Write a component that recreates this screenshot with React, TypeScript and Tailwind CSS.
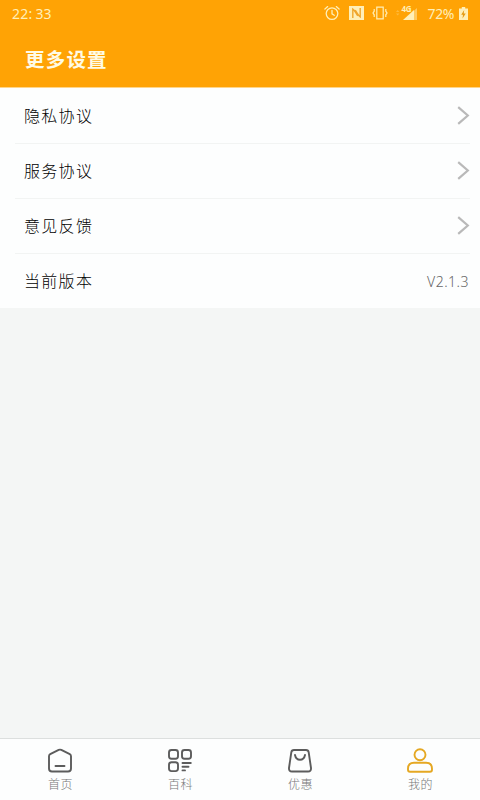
import type { ReactNode } from 'react'

const rows = [
  { label: '隐私协议' },
  { label: '服务协议' },
  { label: '意见反馈' },
  { label: '当前版本', value: 'V2.1.3' },
]

function StatusBar() {
  return (
    <div className="flex h-[27px] items-center justify-between pl-3 pr-3 text-[#ffefb8]">
      <span className="flex text-[14px] leading-none tracking-[0.2px]">
        22:<span className="ml-[3px]">33</span>
      </span>
      <div className="flex items-center">
        {/* Alarm */}
        <svg className="-mt-px" width="16" height="16" viewBox="0 0 16 16" fill="none" stroke="currentColor" strokeWidth="1.3" strokeLinecap="round">
          <circle cx="8" cy="8.6" r="5.8" />
          <path d="M8 5.3v3.5l2.2 1.5M.9 4l2.8-2.4M15.1 4l-2.8-2.4" />
        </svg>
        {/* NFC */}
        <svg className="-mt-px ml-[9px]" width="15" height="14" viewBox="0 0 15 14">
          <path fill="currentColor" d="M0 0h15v14H0z" />
          <path fill="none" stroke="#f0a62c" strokeWidth="1.4" d="M3.8 12V3c1.4.8 2.2 2.6 5 6.8M11.2 2v9c-1.4-.8-2.2-2.6-5-6.8" />
        </svg>
        {/* Vibrate */}
        <svg className="-mt-px ml-2" width="16" height="14" viewBox="0 0 16 14" fill="none" stroke="currentColor" strokeWidth="1.2">
          <path d="M4.8 1.2h6.4v11.6H4.8zM2.2 3v2.2L1 7l1.2 1.8V11M13.8 3v2.2L15 7l-1.2 1.8V11" />
        </svg>
        {/* Mobile signal */}
        <svg className="ml-2 -mt-[3px] overflow-visible" width="24" height="17" viewBox="0 0 24 17">
          <path fill="currentColor" opacity=".3" d="M0 8l1.7-2 1.7 2zM0 9.5l1.7 2 1.7-2z" />
          <path fill="currentColor" opacity=".5" d="M21 4v12h-5V8.5z" />
          <path fill="currentColor" d="M18 6V16H7z" />
        </svg>
        <span className="-ml-[18px] -mt-[9px] w-[18px] text-[8px] font-bold leading-[10px] tracking-[-0.3px]">4G</span>
        <span className="ml-[8px] text-[14px] leading-none tracking-[-0.4px]">72%</span>
        {/* Charging battery */}
        <svg className="ml-[5px]" width="9" height="13" viewBox="0 0 9 13">
          <path fill="currentColor" d="M2.8 0h3.4v1.5H9V13H0V1.5h2.8z" />
          <path fill="#e59a12" d="M5.2 3L2.2 7.7H4l-.5 3.8 3.2-5h-2z" />
        </svg>
      </div>
    </div>
  )
}

function TabIcon({ children }: { children: ReactNode }) {
  return (
    <svg width="28" height="26" viewBox="0 -0.5 28 26" fill="none" stroke="currentColor" strokeWidth="1.9" strokeLinecap="round" strokeLinejoin="round">
      {children}
    </svg>
  )
}

const tabs = [
  {
    label: '首页',
    icon: <path d="M12.7 2.4L4.2 6.7Q3 7.3 3 8.7V21q0 3 3 3h16q3 0 3-3V8.7q0-1.4-1.2-2L15.3 2.4q-1.3-.6-2.6 0zM9.5 18.5h9" />,
  },
  {
    label: '百科',
    icon: (
      <>
        <rect x="3" y="2.5" width="9" height="8.8" rx="2.5" />
        <rect x="16" y="2.5" width="9" height="8.8" rx="2.5" />
        <rect x="3" y="14.8" width="9" height="8.8" rx="2.5" />
        <path d="M16.5 15.5h8.3M16.5 19.2h6M16.5 22.9h2.5" />
      </>
    ),
  },
  {
    label: '优惠',
    icon: <path d="M8 2.5h12q2.4 0 2.7 2.4l2.3 15.6q.3 3.5-3 3.5H6q-3.3 0-3-3.5L5.3 4.9Q5.6 2.5 8 2.5zM9 7.5c1.2 6.3 8.8 6.3 10 0" />,
  },
  {
    label: '我的',
    active: true,
    icon: (
      <>
        <circle cx="14" cy="7.3" r="5.5" />
        <path d="M8 15.2h12q6 0 6 6v1q0 2-2 2H4q-2 0-2-2v-1q0-6 6-6z" />
      </>
    ),
  },
]

export default function App() {
  return (
    <div className="flex h-screen flex-col bg-[#f4f6f5] font-['Noto_Sans','Noto_Sans_CJK_SC',sans-serif]">
      <header className="h-[88px] border-b border-[#ffd58a] bg-[#ffa305]">
        <StatusBar />
        <h1 className="pl-[25px] pt-[19px] text-[19.5px] font-bold leading-7 tracking-[1.2px] text-[#fffbe6]">更多设置</h1>
      </header>

      <main className="flex-1">
        <ul className="bg-[#fdfefe] pl-[15px] pr-[10px]">
          {rows.map((row) => (
            <li key={row.label} className="flex h-[55px] items-center justify-between border-t border-[#f2f4f3] pb-px pl-[9px] first:border-transparent">
              <span className="text-[16px] font-light tracking-[1.3px] text-black">{row.label}</span>
              {row.value ? (
                <span className="pr-px pt-px text-[14px] font-light tracking-[0.5px] text-[#666]">{row.value}</span>
              ) : (
                <svg width="13" height="19" viewBox="0 0 13 19" fill="none" stroke="#b9b9b9" strokeWidth="2.2">
                  <path d="M1.2 1.2L10.8 9.5L1.2 17.8" />
                </svg>
              )}
            </li>
          ))}
        </ul>
      </main>

      <nav className="grid h-[62px] grid-cols-4 border-t border-[#dcdfde] bg-[#fdfefe]">
        {tabs.map((tab) => (
          <div key={tab.label} className="flex flex-col items-center pt-2">
            <span className={tab.active ? 'text-[#e5a823]' : 'text-[#5c5c5c]'}>
              <TabIcon>{tab.icon}</TabIcon>
            </span>
            <span className="mt-[3px] pl-px text-[12px] font-light leading-[18px] tracking-[0.5px] text-[#777]">{tab.label}</span>
          </div>
        ))}
      </nav>
    </div>
  )
}
